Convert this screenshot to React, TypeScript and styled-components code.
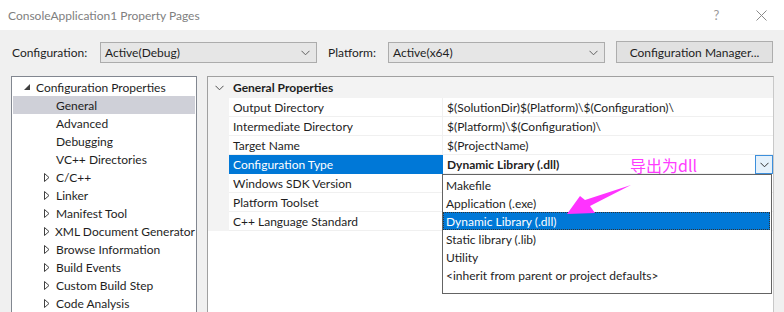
import React from "react";
import styled, { createGlobalStyle, css } from "styled-components";

const Global = createGlobalStyle`
  html, body { margin: 0; padding: 0; background: #f0f0f0; }
  body { font-family: Lato, "Noto Sans", sans-serif; font-size: 12px; color: #1e1e1e; }
  * { box-sizing: border-box; }
`;

const Window = styled.div`
  width: 784px;
  height: 312px;
  overflow: hidden;
  background: #f0f0f0;
  position: relative;
`;

const TitleBar = styled.div`
  height: 30px;
  background: #fff;
  display: flex;
  align-items: center;
  padding-left: 8px;
  color: #808080;
  font-size: 12px;
`;

const TitleText = styled.div`
  flex: 1;
`;

const TitleButton = styled.div`
  width: 45px;
  height: 30px;
  display: flex;
  align-items: center;
  justify-content: center;
  color: #9a9a9a;
  font-size: 13px;
`;

const Toolbar = styled.div`
  height: 46px;
  display: flex;
  align-items: flex-start;
  padding: 12px 0 0 12px;
`;

const Label = styled.div<{ $w: number }>`
  width: ${(p) => p.$w}px;
  height: 21px;
  line-height: 21px;
`;

const Combo = styled.div<{ $w: number }>`
  width: ${(p) => p.$w}px;
  height: 21px;
  background: #e6e6e6;
  border: 1px solid #acacac;
  display: flex;
  align-items: center;
  padding: 0 6px 0 4px;
`;

const ComboText = styled.div`
  flex: 1;
`;

const Button = styled.div`
  margin-left: 11px;
  width: 157px;
  height: 22px;
  margin-top: -1px;
  background: #e1e1e1;
  border: 1px solid #adadad;
  display: flex;
  align-items: center;
  justify-content: center;
`;

const Content = styled.div`
  display: flex;
  padding-left: 11px;
  gap: 10px;
`;

const TreePanel = styled.div`
  width: 186px;
  height: 260px;
  background: #fff;
  border: 1px solid #828790;
  padding: 1px 1px 0 1px;
`;

const TreeRow = styled.div<{ $indent: number; $selected?: boolean }>`
  height: 18px;
  display: flex;
  align-items: center;
  padding-left: ${(p) => p.$indent}px;
  white-space: nowrap;
  ${(p) =>
    p.$selected &&
    css`
      background: #cfd0d8;
    `}
`;

const Expander = styled.div`
  width: 12px;
  height: 18px;
  display: flex;
  align-items: center;
  justify-content: flex-start;
`;

const GridPanel = styled.div`
  width: 567px;
  height: 260px;
  background: #fff;
  border: 1px solid #a0a0a0;
  border-right-color: #c8c8c8;
`;

const GridRow = styled.div<{ $header?: boolean }>`
  display: flex;
  height: ${(p) => (p.$header ? 21 : 19)}px;
`;

const Margin = styled.div`
  width: 21px;
  background: #f3f3f3;
  display: flex;
  align-items: center;
  justify-content: center;
  padding-left: 2px;
`;

const HeaderCell = styled.div`
  flex: 1;
  background: #f3f3f3;
  font-weight: 700;
  display: flex;
  align-items: center;
  padding-left: 4px;
`;

const NameCell = styled.div<{ $selected?: boolean }>`
  width: 214px;
  display: flex;
  align-items: center;
  padding-left: 4px;
  border-bottom: 1px solid #f0f0f0;
  border-right: 1px solid #f0f0f0;
  white-space: nowrap;
  ${(p) =>
    p.$selected &&
    css`
      background: #0078d7;
      color: #fff;
      border-bottom-color: #0078d7;
      border-right-color: #0078d7;
    `}
`;

const ValueCell = styled.div<{ $bold?: boolean }>`
  flex: 1;
  display: flex;
  align-items: center;
  padding-left: 4px;
  border-bottom: 1px solid #f0f0f0;
  position: relative;
  white-space: nowrap;
  font-weight: ${(p) => (p.$bold ? 700 : 400)};
`;

const ValueText = styled.div`
  flex: 1;
`;

const DropButton = styled.div`
  width: 18px;
  height: 19px;
  margin-bottom: -1px;
  background: #e5f1fb;
  border: 1px solid #3c8fdc;
  display: flex;
  align-items: center;
  justify-content: center;
`;

const DropList = styled.div`
  position: absolute;
  left: -1px;
  top: 19px;
  width: 330px;
  height: 120px;
  background: #fff;
  border: 1px solid #646464;
  padding-top: 1px;
  font-weight: 400;
  z-index: 2;
`;

const DropItem = styled.div<{ $selected?: boolean }>`
  height: 18px;
  display: flex;
  align-items: center;
  padding-left: 3px;
  margin-right: 1px;
  ${(p) =>
    p.$selected &&
    css`
      background: #0078d7;
      color: #fff;
      outline: 1px dotted #333;
      outline-offset: -1px;
    `}
`;

const Annotation = styled.div`
  position: absolute;
  left: 630px;
  top: 155px;
  color: #ff3cff;
  font-family: "Noto Sans CJK SC", sans-serif;
  font-size: 16px;
  line-height: 20px;
  z-index: 3;
`;

const ArrowSvg = styled.svg`
  position: absolute;
  left: 560px;
  top: 180px;
  z-index: 3;
`;

const Chevron = ({ color = "#606060" }: { color?: string }) => (
  <svg width="9" height="6" viewBox="0 0 9 6">
    <path d="M0.5 0.8 L4.5 4.8 L8.5 0.8" fill="none" stroke={color} strokeWidth="1" />
  </svg>
);

const Collapsed = () => (
  <svg width="6" height="9" viewBox="0 0 6 9">
    <path d="M0.5 0.5 L5 4.5 L0.5 8.5 Z" fill="none" stroke="#404040" strokeWidth="1" />
  </svg>
);

const Expanded = () => (
  <svg width="6" height="6" viewBox="0 0 6 6">
    <path d="M6 0 L6 6 L0 6 Z" fill="#404040" />
  </svg>
);

const treeItems: { label: string; indent: number; kind: "exp" | "col" | "none"; selected?: boolean }[] = [
  { label: "Configuration Properties", indent: 11, kind: "exp" },
  { label: "General", indent: 43, kind: "none", selected: true },
  { label: "Advanced", indent: 43, kind: "none" },
  { label: "Debugging", indent: 43, kind: "none" },
  { label: "VC++ Directories", indent: 43, kind: "none" },
  { label: "C/C++", indent: 31, kind: "col" },
  { label: "Linker", indent: 31, kind: "col" },
  { label: "Manifest Tool", indent: 31, kind: "col" },
  { label: "XML Document Generator", indent: 31, kind: "col" },
  { label: "Browse Information", indent: 31, kind: "col" },
  { label: "Build Events", indent: 31, kind: "col" },
  { label: "Custom Build Step", indent: 31, kind: "col" },
  { label: "Code Analysis", indent: 31, kind: "col" },
];

const props: { name: string; value: string }[] = [
  { name: "Output Directory", value: "$(SolutionDir)$(Platform)\\$(Configuration)\\" },
  { name: "Intermediate Directory", value: "$(Platform)\\$(Configuration)\\" },
  { name: "Target Name", value: "$(ProjectName)" },
  { name: "Configuration Type", value: "Dynamic Library (.dll)" },
  { name: "Windows SDK Version", value: "" },
  { name: "Platform Toolset", value: "" },
  { name: "C++ Language Standard", value: "" },
];

const options = [
  "Makefile",
  "Application (.exe)",
  "Dynamic Library (.dll)",
  "Static library (.lib)",
  "Utility",
  "<inherit from parent or project defaults>",
];

export default function App() {
  return (
    <Window>
      <Global />
      <TitleBar>
        <TitleText>ConsoleApplication1 Property Pages</TitleText>
        <TitleButton>?</TitleButton>
        <TitleButton>
          <svg width="11" height="11" viewBox="0 0 11 11">
            <path d="M0.5 0.5 L10.5 10.5 M10.5 0.5 L0.5 10.5" stroke="#8a8a8a" strokeWidth="1" />
          </svg>
        </TitleButton>
      </TitleBar>
      <Toolbar>
        <Label $w={88}>Configuration:</Label>
        <Combo $w={217}>
          <ComboText>Active(Debug)</ComboText>
          <Chevron />
        </Combo>
        <Label $w={60} style={{ marginLeft: 11 }}>Platform:</Label>
        <Combo $w={217}>
          <ComboText>Active(x64)</ComboText>
          <Chevron />
        </Combo>
        <Button>Configuration Manager...</Button>
      </Toolbar>
      <Content>
        <TreePanel>
          {treeItems.map((t) => (
            <TreeRow key={t.label} $indent={t.indent} $selected={t.selected}>
              {t.kind !== "none" && (
                <Expander>{t.kind === "exp" ? <Expanded /> : <Collapsed />}</Expander>
              )}
              {t.label}
            </TreeRow>
          ))}
        </TreePanel>
        <GridPanel>
          <GridRow $header>
            <Margin>
              <Chevron color="#505050" />
            </Margin>
            <HeaderCell>General Properties</HeaderCell>
          </GridRow>
          {props.map((p) => {
            const sel = p.name === "Configuration Type";
            return (
              <GridRow key={p.name}>
                <Margin />
                <NameCell $selected={sel}>{p.name}</NameCell>
                <ValueCell $bold={sel}>
                  <ValueText>{p.value}</ValueText>
                  {sel && (
                    <>
                      <DropButton>
                        <Chevron color="#303030" />
                      </DropButton>
                      <DropList>
                        {options.map((o) => (
                          <DropItem key={o} $selected={o === "Dynamic Library (.dll)"}>
                            {o}
                          </DropItem>
                        ))}
                      </DropList>
                    </>
                  )}
                </ValueCell>
              </GridRow>
            );
          })}
        </GridPanel>
      </Content>
      <Annotation>导出为dll</Annotation>
      <ArrowSvg width="80" height="40" viewBox="560 180 80 40">
        <path
          d="M567 214 L580 196 L585 200 L631 185 L590 206 L595 213 Z"
          fill="#ff33ff"
        />
      </ArrowSvg>
    </Window>
  );
}
